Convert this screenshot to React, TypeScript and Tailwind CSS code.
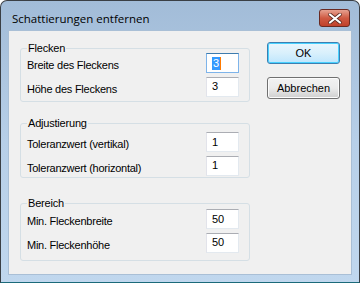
import React from 'react';

const font = { fontFamily: '"Liberation Sans", Arial, sans-serif' };

function Field({ value, focused }: { value: string; focused?: boolean }) {
  return (
    <div
      className={
        'w-[33px] h-[20px] bg-white border flex items-center pl-[5px] text-[11px] text-black ' +
        (focused
          ? 'border-[#7eb4ea] border-t-[#3d7bad]'
          : 'border-[#e3e9ef] border-t-[#abadb3] border-l-[#e2e3ea]')
      }
    >
      {focused ? (
        <span className="bg-[#3399ff] text-white leading-[13px] px-[1px] border-r border-[#ff7a00]">{value}</span>
      ) : (
        <span className="leading-[13px]">{value}</span>
      )}
    </div>
  );
}

function Group({
  title,
  rows,
  box,
}: {
  title: string;
  rows: { label: string; value: string; focused?: boolean }[];
  box: string;
}) {
  return (
    <div className={`relative w-[230px] border border-[#d5dfe5] rounded-[3px] flex flex-col gap-[3px] pl-[6px] pr-[10px] ${box}`}>
      <span className="absolute -top-[8px] left-[6px] px-[1px] bg-[#f0f0f0] text-[11px] leading-[14px] text-black tracking-[-0.2px]">
        {title}
      </span>
      {rows.map((r) => (
        <div key={r.label} className="flex items-center justify-between">
          <span className="pt-[4px] text-[11px] text-black tracking-[-0.25px]">{r.label}</span>
          <Field value={r.value} focused={r.focused} />
        </div>
      ))}
    </div>
  );
}

export default function App() {
  return (
    <div className="w-[360px] h-[283px] bg-white" style={font}>
      <div className="w-[360px] h-[283px] rounded-t-[7px] border border-[#3a3f45] border-b-[#1b6a7a] bg-gradient-to-b from-[#a2bcd8] via-[#b7cfe8] to-[#c0d7ee] flex flex-col">
        <div className="h-[29px] flex items-start justify-between">
          <span
            className="ml-[11px] mt-[11px] text-[11.5px] leading-[14px] text-black"
            style={{ fontFamily: '"Open Sans", "Noto Sans", sans-serif' }}
          >
            Schattierungen entfernen
          </span>
          <div className="mt-[8px] mr-[9px] w-[31px] h-[18px] rounded-[3px] border border-[#6a2a22] bg-gradient-to-b from-[#e6a190] via-[#cf5a43] to-[#c0402a] flex items-center justify-center">
            <svg width="14" height="11" viewBox="0 0 14 11">
              <path d="M2 1.5 L12 9.5 M12 1.5 L2 9.5" stroke="#5a2a22" strokeWidth="3.6" strokeLinecap="round" />
              <path d="M2 1.5 L12 9.5 M12 1.5 L2 9.5" stroke="#ffffff" strokeWidth="2.2" strokeLinecap="round" />
            </svg>
          </div>
        </div>
        <div className="ml-[7px] w-[344px] h-[245px] bg-[#f0f0f0] border border-[#a9bfd6] flex">
          <div className="flex flex-col pl-[11px] pt-[17px]">
            <Group
              title="Flecken"
              box="h-[54px] pt-[4px]"
              rows={[
                { label: 'Breite des Fleckens', value: '3', focused: true },
                { label: 'Höhe des Fleckens', value: '3' },
              ]}
            />
            <Group
              title="Adjustierung"
              box="h-[55px] mt-[21px] pt-[8px]"
              rows={[
                { label: 'Toleranzwert (vertikal)', value: '1' },
                { label: 'Toleranzwert (horizontal)', value: '1' },
              ]}
            />
            <Group
              title="Bereich"
              box="h-[58px] mt-[25px] pt-[5px]"
              rows={[
                { label: 'Min. Fleckenbreite', value: '50' },
                { label: 'Min. Fleckenhöhe', value: '50' },
              ]}
            />
          </div>
          <div className="flex flex-col ml-[17px] pt-[11px] gap-[13px]">
            <button className="w-[73px] h-[22px] rounded-[3px] border border-[#3c7fb1] bg-gradient-to-b from-[#eaf6fd] via-[#d9f0fc] to-[#bee6fd] shadow-[inset_0_0_0_1px_#48d1ff] text-[11px] text-black">
              OK
            </button>
            <button className="w-[73px] h-[22px] rounded-[3px] border border-[#707070] bg-gradient-to-b from-[#f2f2f2] via-[#ebebeb] to-[#cfcfcf] shadow-[inset_0_0_0_1px_#fcfcfc] text-[11px] text-black">
              Abbrechen
            </button>
          </div>
        </div>
      </div>
    </div>
  );
}
